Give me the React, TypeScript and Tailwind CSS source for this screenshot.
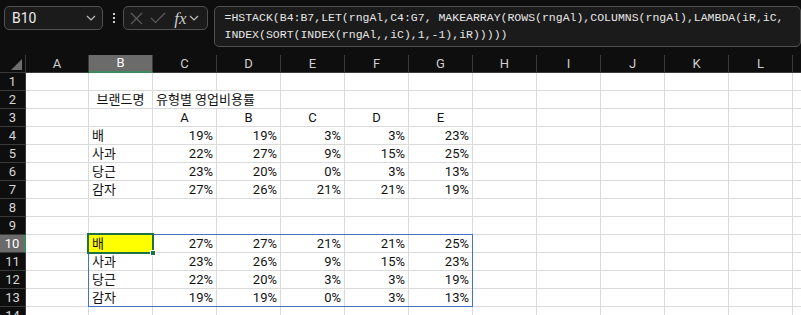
import React from 'react';

const COLS = ['A', 'B', 'C', 'D', 'E', 'F', 'G', 'H', 'I', 'J', 'K', 'L', 'M'];

type Cell = { text: string; align?: 'left' | 'right' | 'center'; noRightLine?: boolean };

const pct = (n: number): Cell => ({ text: `${n}%`, align: 'right' });
const label = (t: string): Cell => ({ text: t, align: 'left' });
const head = (t: string): Cell => ({ text: t, align: 'center' });

const dataRow = (name: string, nums: number[]): Record<string, Cell> => ({
  B: label(name),
  C: pct(nums[0]),
  D: pct(nums[1]),
  E: pct(nums[2]),
  F: pct(nums[3]),
  G: pct(nums[4]),
});

const ROWS: Record<string, Cell>[] = [
  {},
  { B: head('브랜드명'), C: { text: '유형별 영업비용률', align: 'left', noRightLine: true } },
  { C: head('A'), D: head('B'), E: head('C'), F: head('D'), G: head('E') },
  dataRow('배', [19, 19, 3, 3, 23]),
  dataRow('사과', [22, 27, 9, 15, 25]),
  dataRow('당근', [23, 20, 0, 3, 13]),
  dataRow('감자', [27, 26, 21, 21, 19]),
  {},
  {},
  dataRow('배', [27, 27, 21, 21, 25]),
  dataRow('사과', [23, 26, 9, 15, 23]),
  dataRow('당근', [22, 20, 3, 3, 19]),
  dataRow('감자', [19, 19, 0, 3, 13]),
  {},
];

const Chevron = () => (
  <svg width="10" height="6" viewBox="0 0 10 6" fill="none" stroke="#bdbdbd" strokeWidth="1.2">
    <path d="M1 1l4 4 4-4" />
  </svg>
);

const TopBar = () => (
  <div className="flex items-start h-[55px] pt-[6px] pl-[4px] bg-[#0e0e0e]">
    <div className="flex items-center justify-between w-[101px] h-[24px] pl-[7px] pr-[6px] rounded-[5px] border border-[#505050] bg-[#1b1b1b]">
      <span className="text-[14px] text-[#ececec]">B10</span>
      <Chevron />
    </div>
    <div className="flex flex-col gap-[2px] ml-[10px] mt-[7px]">
      <span className="w-[2px] h-[2px] bg-[#cfcfcf]" />
      <span className="w-[2px] h-[2px] bg-[#cfcfcf]" />
      <span className="w-[2px] h-[2px] bg-[#cfcfcf]" />
    </div>
    <div className="flex items-center w-[86px] h-[24px] ml-[8px] pl-[6px] rounded-[5px] border border-[#505050] bg-[#1b1b1b]">
      <svg width="13" height="13" viewBox="0 0 13 13" stroke="#5c5c5c" strokeWidth="1.2">
        <path d="M1 1l11 11M12 1L1 12" />
      </svg>
      <svg className="ml-[7px]" width="16" height="12" viewBox="0 0 16 12" fill="none" stroke="#5c5c5c" strokeWidth="1.2">
        <path d="M1 6l4.5 4.5L15 1" />
      </svg>
      <span className="ml-[8px] text-[17px] leading-none italic text-[#c9c9c9] [font-family:'Liberation_Serif',serif]">fx</span>
      <span className="ml-[3px]"><Chevron /></span>
    </div>
    <div className="ml-[6px] w-[600px] h-[41px] pl-[10px] pt-[2px] rounded-[5px] border border-[#505050] bg-[#1b1b1b] text-[11.5px] leading-[17px] text-[#e6e6e6] whitespace-pre [font-family:'Liberation_Mono',monospace]">
      {'=HSTACK(B4:B7,LET(rngAl,C4:G7, MAKEARRAY(ROWS(rngAl),COLUMNS(rngAl),LAMBDA(iR,iC,\nINDEX(SORT(INDEX(rngAl,,iC),1,-1),iR)))))'}
    </div>
  </div>
);

export default function App() {
  return (
    <div className="w-[801px] h-[315px] overflow-hidden bg-white [font-family:Roboto,'Noto_Sans_CJK_KR',sans-serif]">
      <TopBar />
      <div className="relative">
        <div className="grid grid-cols-[26px_63px_repeat(12,64px)] w-max">
          {/* header row */}
          <div className="h-[18px] bg-[#0e0e0e] border-r border-b border-[#3a3a3a] flex items-end justify-end pr-[3px] pb-[2px]">
            <svg width="11" height="11" viewBox="0 0 11 11">
              <polygon points="11,0 11,11 0,11" fill="#6e6e6e" />
            </svg>
          </div>
          {COLS.map((c) =>
            c === 'B' ? (
              <div key={c} className="h-[18px] bg-[#6b6b6b] border-r border-[#3a3a3a] border-b-2 border-b-[#3d8a5f] flex items-center justify-center text-[13px] text-white">
                {c}
              </div>
            ) : (
              <div key={c} className="h-[18px] bg-[#0e0e0e] border-r border-b border-[#3a3a3a] flex items-center justify-center text-[13px] text-[#cfcfcf]">
                {c}
              </div>
            )
          )}
          {ROWS.map((row, ri) => {
            const n = ri + 1;
            const sel = n === 10;
            return (
              <React.Fragment key={n}>
                <div
                  className={
                    sel
                      ? 'h-[18px] bg-[#6b6b6b] border-b border-[#3a3a3a] border-r-2 border-r-[#3d8a5f] flex items-center justify-center text-[13px] text-white'
                      : 'h-[18px] bg-[#0e0e0e] border-r border-b border-[#3a3a3a] flex items-center justify-center text-[13px] text-[#d6d6d6]'
                  }
                >
                  {n}
                </div>
                {COLS.map((c) => {
                  const cell = row[c];
                  const yellow = sel && c === 'B';
                  const align =
                    cell?.align === 'right'
                      ? 'justify-end pr-[3px]'
                      : cell?.align === 'center'
                      ? 'justify-center'
                      : 'justify-start pl-[3px]';
                  return (
                    <div
                      key={c}
                      className={`h-[18px] flex items-center whitespace-nowrap overflow-visible text-[13px] text-[#111] border-b border-[#dadada] ${
                        cell?.noRightLine ? '' : 'border-r'
                      } ${yellow ? 'bg-[#ffff00]' : ''} ${align}`}
                    >
                      {cell?.text}
                    </div>
                  );
                })}
              </React.Fragment>
            );
          })}
        </div>
        {/* range outline B10:G13 */}
        <div className="absolute left-[88px] top-[179px] w-[385px] h-[73px] border border-[#4472c4] pointer-events-none" />
        {/* active cell B10 */}
        <div className="absolute left-[87px] top-[178px] w-[67px] h-[21px] border-2 border-[#1e7145] pointer-events-none" />
        <div className="absolute left-[150px] top-[195px] w-[6px] h-[6px] bg-[#1e7145] border border-white" />
      </div>
    </div>
  );
}
